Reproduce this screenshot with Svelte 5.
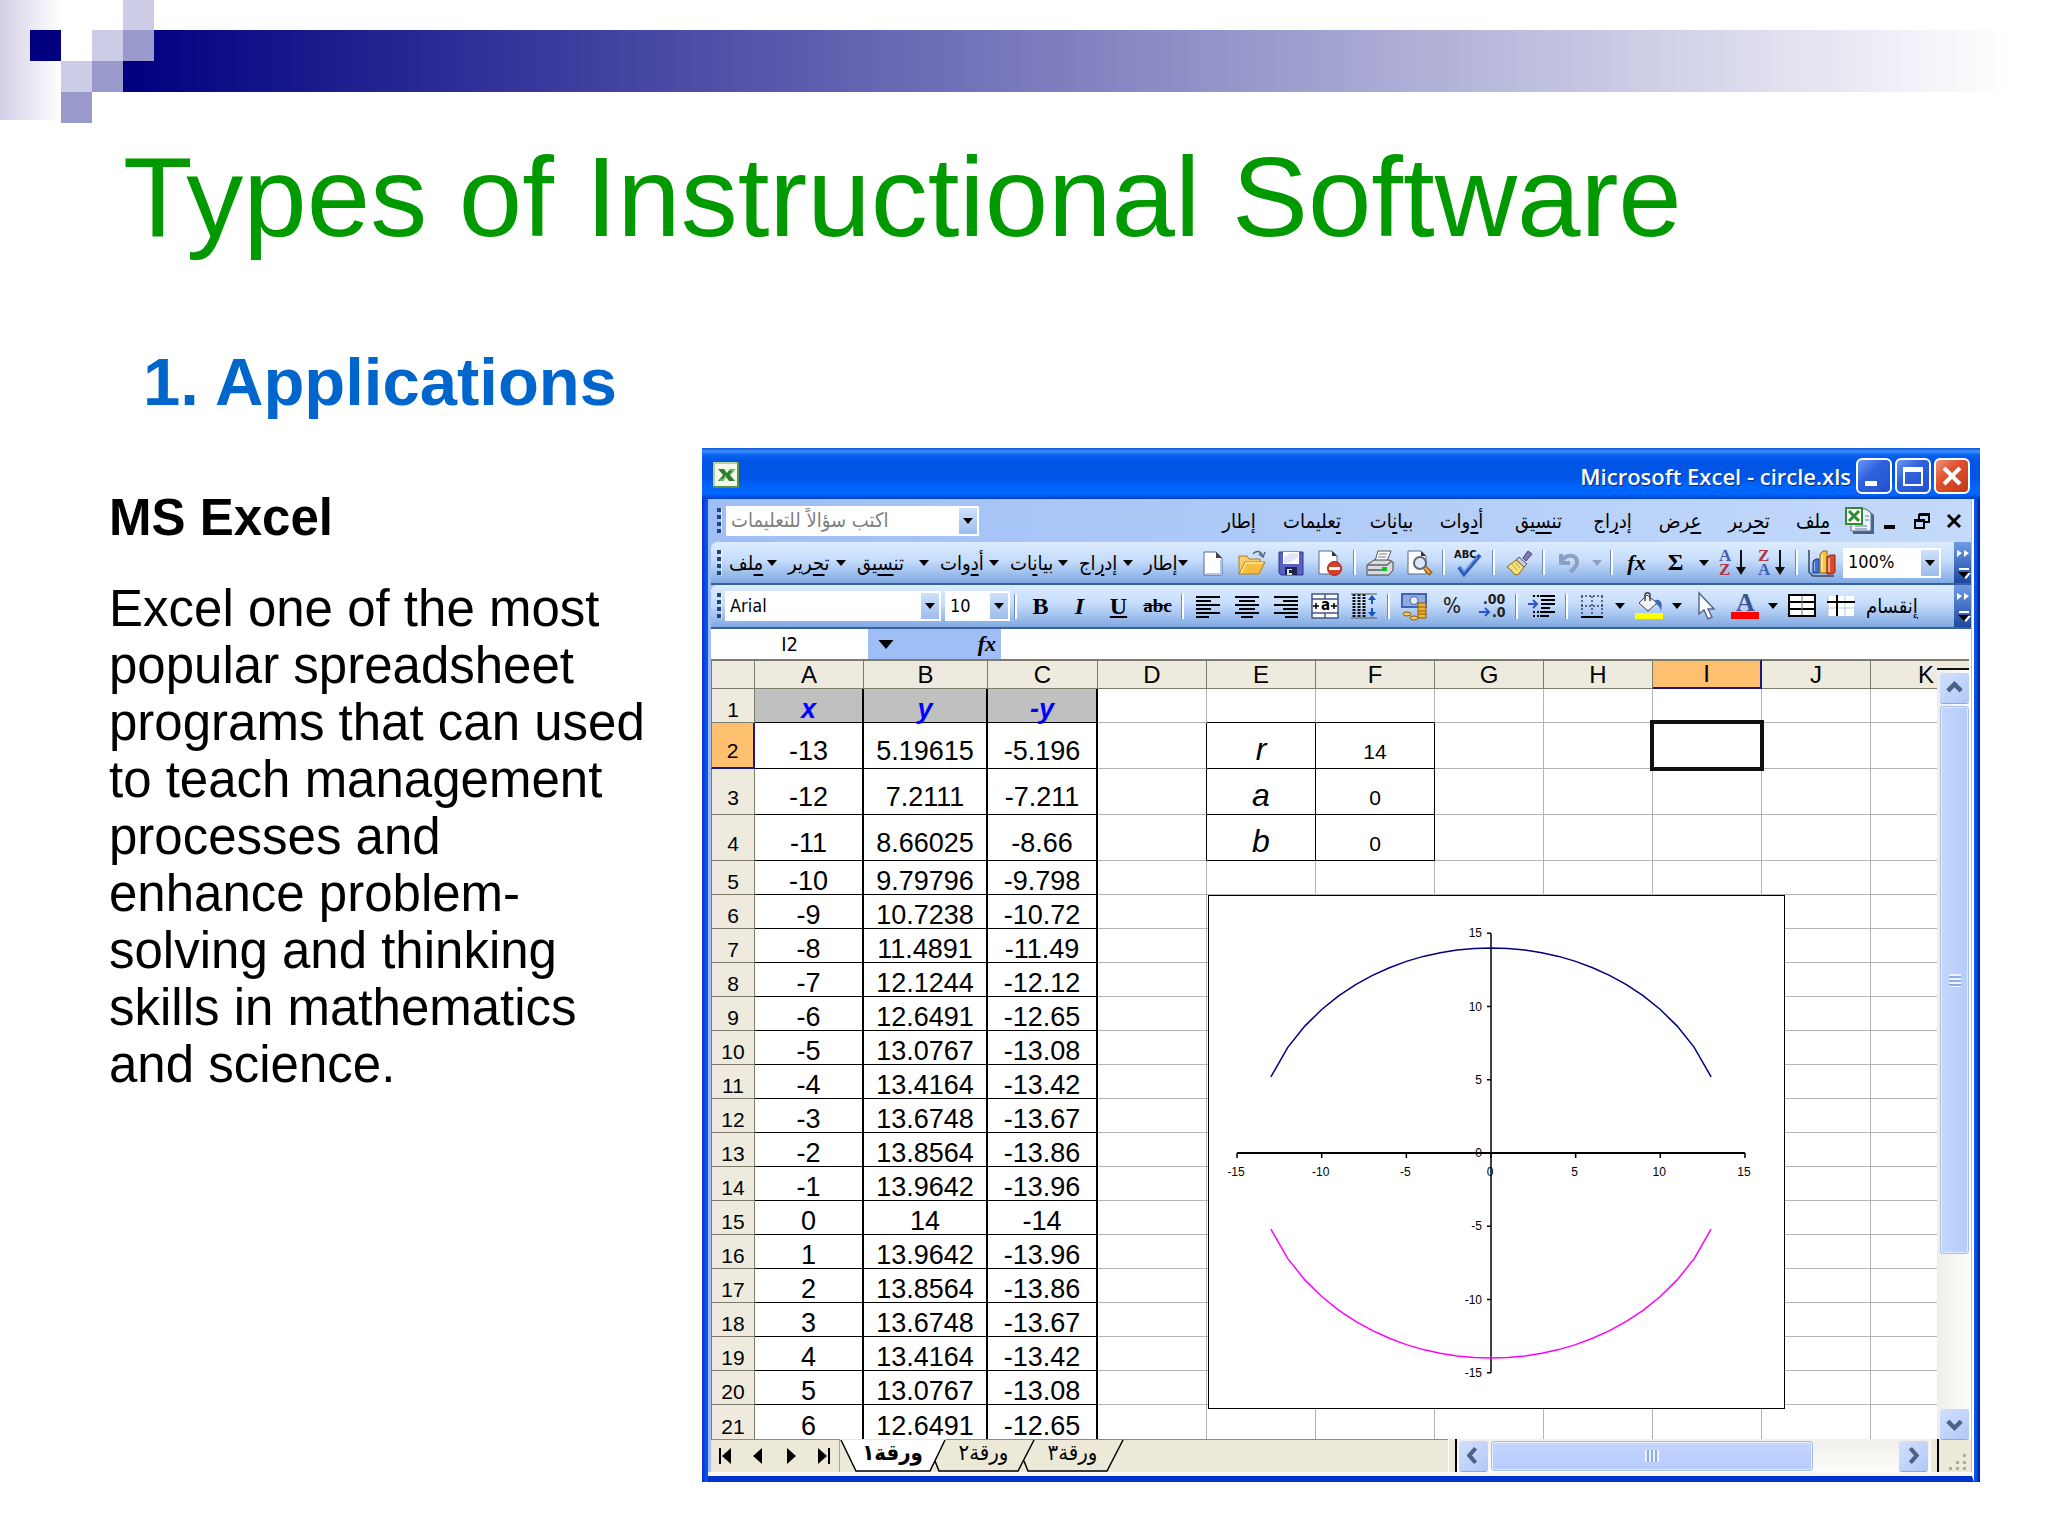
<script lang="ts">
	type Cell = string | number;

	const columns = ['A', 'B', 'C', 'D', 'E', 'F', 'G', 'H', 'I', 'J', 'K'];

	const values: Cell[][] = [
		['x', 'y', '-y'],
		[-13, '5.19615', '-5.196'],
		[-12, '7.2111', '-7.211'],
		[-11, '8.66025', '-8.66'],
		[-10, '9.79796', '-9.798'],
		[-9, '10.7238', '-10.72'],
		[-8, '11.4891', '-11.49'],
		[-7, '12.1244', '-12.12'],
		[-6, '12.6491', '-12.65'],
		[-5, '13.0767', '-13.08'],
		[-4, '13.4164', '-13.42'],
		[-3, '13.6748', '-13.67'],
		[-2, '13.8564', '-13.86'],
		[-1, '13.9642', '-13.96'],
		[0, '14', '-14'],
		[1, '13.9642', '-13.96'],
		[2, '13.8564', '-13.86'],
		[3, '13.6748', '-13.67'],
		[4, '13.4164', '-13.42'],
		[5, '13.0767', '-13.08'],
		[6, '12.6491', '-12.65']
	];

	// r, a and b live in E2:F4
	const params: Record<number, Cell[]> = { 1: ['r', 14], 2: ['a', 0], 3: ['b', 0] };

	// [before, accelerator, after]
	const menus = [
		['', 'إ', 'طار'],
		['', 'ت', 'عليمات'],
		['بيا', 'ن', 'ات'],
		['أ', 'د', 'وات'],
		['تن', 'س', 'يق'],
		['إد', 'ر', 'اج'],
		['', 'ع', 'رض'],
		['ت', 'ح', 'رير'],
		['', 'م', 'لف']
	];
	const barMenus = [8, 7, 4, 3, 2, 5, 0].map((i) => menus[i]);

	const ticks = [-15, -10, -5, 0, 5, 10, 15];
	const cx = 283;
	const cy = 258;
	const ux = 16.93;
	const uy = 14.65;

	function arc(sign: number) {
		const pts = [];
		for (let x = -13; x <= 13; x++) {
			const y = Math.sqrt(14 * 14 - x * x) * sign;
			pts.push(`${(cx + x * ux).toFixed(1)},${(cy - y * uy).toFixed(1)}`);
		}
		return pts.join(' ');
	}

	let zoom = $state('100%');
	let font = $state('Arial');
	let size = $state('10');
	let nameBox = $state('I2');
	let formula = $state('');
</script>

{#snippet down(cls = '')}
	<svg class="down {cls}" viewBox="0 0 10 6" width="10" height="6" aria-hidden="true"><path d="M0 0h10L5 6z" fill="currentColor" /></svg>
{/snippet}

{#snippet menuText(m: string[])}
	<bdi dir="rtl">{m[0]}<u>{m[1]}</u>{m[2]}</bdi>
{/snippet}

{#snippet excelMark()}
	<rect x="1" y="1" width="26" height="26" fill="#5d9148" />
	<rect x="1" y="1" width="24" height="24" fill="#b9d39c" />
	<rect x="3" y="3" width="22" height="22" fill="#f3f8e8" />
	<path d="M6 8h6l3 4 3-4h5l-5 6 5 6h-6l-3-4-3 4H6l5-6z" fill="#2e7d32" />
	<path d="M17 9h5l-4 5M8 19h3l3-4" fill="none" stroke="#7fc07a" stroke-width="1.5" />
{/snippet}

{#snippet icon(name: string)}
	<svg viewBox="0 0 28 28" width="28" height="28" aria-hidden="true">
		{#if name === 'new'}
			<path d="M5 3h12l6 6v17H5z" fill="#fff" stroke="#59688c" />
			<path d="M17 3v6h6z" fill="#444" />
			<path d="M22 11v14H7" fill="none" stroke="#b5c3e2" stroke-width="2" />
		{:else if name === 'open'}
			<path d="M1 25V7h8l2 3h11v4" fill="#f6cf6a" stroke="#b07d1c" />
			<path d="M1 25l6-12h20l-6 12z" fill="#f9bd3d" stroke="#b07d1c" />
			<path d="M3 24l5-10h17" fill="none" stroke="#ffeaa8" stroke-width="1.5" />
			<path d="M15 5c3-4 8-3 9 1m3-3l-2 5-4-3" fill="none" stroke="#52627f" stroke-width="1.5" />
		{:else if name === 'save'}
			<path d="M2 3h24v23H4l-2-2z" fill="#5a5fc4" stroke="#2f3587" />
			<path d="M6 3h16v12H6z" fill="#fff" /><path d="M7 9l6-5h8v4l-8 6H7z" fill="#dfe4fa" />
			<path d="M8 18h12v8H8z" fill="#1d2350" /><path d="M10 20h5v6h-5z" fill="#dde" /><path d="M12 21h3v3h-3z" fill="#222" />
		{:else if name === 'permission'}
			<path d="M3 2h13l5 5v18H3z" fill="#fff" stroke="#59688c" /><path d="M16 2v5h5z" fill="#333" />
			<circle cx="18.5" cy="19.5" r="7" fill="#d9402a" stroke="#a32414" /><path d="M13 18h11v3H13z" fill="#fff" />
		{:else if name === 'print'}
			<path d="M9 12l3-10h13l-4 10z" fill="#fff" stroke="#555" /><path d="M13 5h8M12 8h8" stroke="#777" />
			<path d="M1 16l7-5h15l4 2v8l-4 5H1z" fill="#d8dbe0" stroke="#444" />
			<path d="M1 16h20l5-4" fill="none" stroke="#666" stroke-width="1.5" /><path d="M2 20h19v2H2z" fill="#767b86" />
			<path d="M16 18h5v4h-5z" fill="#14c21b" />
		{:else if name === 'preview'}
			<path d="M3 2h13l5 5v18H3z" fill="#fff" stroke="#59688c" /><path d="M16 2v5h5z" fill="#333" />
			<circle cx="15" cy="14" r="6" fill="#d8e8fb" stroke="#667" stroke-width="2" />
			<path d="M20 19l6 6" stroke="#8d5a1d" stroke-width="5" /><path d="M20 19l5 5" stroke="#eda33a" stroke-width="2.5" />
		{:else if name === 'spell'}
			<text x="-1" y="9" font-size="11" font-weight="700" fill="#111">ABC</text>
			<path d="M4 18l5 7L25 6" fill="none" stroke="#2e5cc0" stroke-width="4" /><path d="M5 17l4 6L22 8" fill="none" stroke="#8fb0f0" stroke-width="1" />
		{:else if name === 'brush'}
			<path d="M18 9l5-7 4 3-6 7z" fill="#8279ad" stroke="#4b426f" /><path d="M14 8l8 7-3 3-8-7z" fill="#c9c9d8" stroke="#555" />
			<path d="M11 11l8 7-6 8-4-1-3-4-4-3z" fill="#f4df7c" stroke="#86701c" />
			<path d="M7 15l5 6M10 13l5 6" stroke="#c4a83f" />
		{:else if name === 'undo'}
			<path d="M6 5v9h9M6 14C9 5 22 4 22 13c0 5-4 8-7 10" fill="none" stroke="#8c9fc4" stroke-width="4" />
		{:else if name === 'az' || name === 'za'}
			<text x="0" y="12" font-family="Liberation Serif" font-size="17" font-weight="700" fill={name === 'az' ? '#3f5fae' : '#b0323c'}>{name === 'az' ? 'A' : 'Z'}</text>
			<text x="0" y="26" font-family="Liberation Serif" font-size="17" font-weight="700" fill={name === 'az' ? '#b0323c' : '#3f5fae'}>{name === 'az' ? 'Z' : 'A'}</text>
			<path d="M22 1v22" stroke="#111" stroke-width="2" /><path d="M17 18h10l-5 8z" fill="#111" />
		{:else if name === 'chart'}
			<path d="M1 1v22l4 4h21" fill="none" stroke="#3b4660" stroke-width="1.5" />
			<path d="M5 12l3-2h3v14H5z" fill="#3d73d8" stroke="#1d3f8a" /><path d="M12 5l3-3h4v22h-7z" fill="#f7c541" stroke="#8f6812" />
			<path d="M19 8l3-2h5v17l-2 2h-6z" fill="#dd4a25" stroke="#8a2410" /><path d="M13 6h2v16h-2zM20 9h2v14h-2zM6 13h1v9H6z" fill="#fff" opacity=".5" />
		{:else if name === 'left'}
			<path d="M2 5h24M2 9h15M2 13h24M2 17h15M2 21h24M2 25h13" stroke="#000" stroke-width="2" />
		{:else if name === 'center'}
			<path d="M2 5h24M6 9h16M2 13h24M6 17h16M2 21h24M8 25h12" stroke="#000" stroke-width="2" />
		{:else if name === 'right'}
			<path d="M2 5h24M11 9h15M2 13h24M11 17h15M2 21h24M13 25h13" stroke="#000" stroke-width="2" />
		{:else if name === 'merge'}
			<path d="M1 2h26v24H1z" fill="#fff" stroke="#44567f" stroke-width="1.5" />
			<path d="M1 7h26M1 21h26M14 2v5M14 21v5" stroke="#44567f" stroke-width="1.5" />
			<text x="10" y="18" font-size="15" font-weight="700">a</text><path d="M2 14h6M5 11v6M26 14h-6M23 11v6" stroke="#000" fill="none" stroke-width="1.5" />
		{:else if name === 'spacing'}
			<path d="M4 2v24M9 2v24M14 2v24" stroke="#111" stroke-width="3" stroke-dasharray="2 1" /><path d="M1 2h26M1 26h26" stroke="#555" />
			<path d="M22 4v8M22 16v8" stroke="#1554d1" stroke-width="2" /><path d="M18 8l4-5 4 5zM18 20l4 5 4-5z" fill="#1554d1" />
		{:else if name === 'currency'}
			<path d="M1 1h26v15H1z" fill="#3f63b5" /><path d="M3 3h22v11H3z" fill="#91abdc" /><circle cx="14" cy="8.5" r="4" fill="#e4ecfa" stroke="#3f63b5" />
			<path d="M18 11h8v15h-8z" fill="#f1b32c" stroke="#8b5a0c" /><path d="M18 15h8M18 19h8M18 22h8" stroke="#8b5a0c" />
			<ellipse cx="7" cy="22" rx="4" ry="2" fill="#f6c84c" stroke="#8b5a0c" /><ellipse cx="14" cy="26" rx="4" ry="2" fill="#f6c84c" stroke="#8b5a0c" />
		{:else if name === 'percent'}
			<text x="4" y="21" font-size="21" fill="#111">%</text>
		{:else if name === 'decimal'}
			<text x="5" y="12" font-size="14" font-weight="700" fill="#222">.00</text><text x="14" y="25" font-size="14" font-weight="700" fill="#222">.0</text>
			<path d="M1 20h10M7 16l4 4-4 4" fill="none" stroke="#2b57c4" stroke-width="2" />
		{:else if name === 'indent'}
			<path d="M3 4h24M13 8h14M13 12h14M13 16h9M3 20h24M3 24h18" stroke="#000" stroke-width="2" /><path d="M3 4h9M3 20h9M3 24h9" stroke="#b7cff5" stroke-width="2" stroke-dasharray="2 2" />
			<path d="M0 12h9M5 8l4 4-4 4" fill="none" stroke="#2b57c4" stroke-width="2" />
		{:else if name === 'borders'}
			<path d="M3 4h22M3 14h22M4 4v18M14 4v18M24 4v18" stroke="#35456e" stroke-width="1.5" stroke-dasharray="2 2" /><path d="M3 25h22" stroke="#000" stroke-width="2" />
		{:else if name === 'fill'}
			<path d="M12 3l10 8-9 8-9-8z" fill="#f2f4f8" stroke="#444" /><path d="M10 9V3c0-3 5-3 5 0v6" fill="none" stroke="#444" stroke-width="1.5" />
			<path d="M20 8c6-1 8 3 6 11-1-4-3-6-5-7z" fill="#3e67b4" /><path d="M0 21h28v6H0z" fill="#ff0" />
		{:else if name === 'cursor'}
			<path d="M7 1v21l5-4 4 9 4-2-4-8h6z" fill="#fff" stroke="#56698f" stroke-width="1.5" />
		{:else if name === 'fontcolor'}
			<text x="5" y="19" font-family="Liberation Serif" font-size="26" font-weight="700" fill="#3d5493">A</text><path d="M0 20h28v7H0z" fill="#f00" />
		{:else if name === 'table'}
			<path d="M1 3h26v21H1z" fill="#fff" stroke="#000" stroke-width="2" /><path d="M1 10h26M1 17h26" stroke="#000" stroke-width="2" /><path d="M14 4v19" stroke="#777" />
		{:else if name === 'panes'}
			<path d="M1 4h26v20H1z" fill="#fff" /><path d="M1 16h26M18 4v20M1 4v20" stroke="#b7c4e0" /><path d="M0 10h28M10 3v21" stroke="#000" stroke-width="2" />
		{/if}
	</svg>
{/snippet}

{#snippet tool(name: string, label: string)}
	<button class="tool" aria-label={label}>{@render icon(name)}</button>
{/snippet}

{#snippet chevron()}
	<button class="more" aria-label="More buttons">
		<svg viewBox="0 0 17 42" width="17" height="42" aria-hidden="true">
			<path d="M3 8l5 3-5 4zM10 8l5 3-5 4zM5 26h10v2H5zM6 31h11l-5 6z" fill="#fff" />
			<path d="M4 30h11l-5 6z" fill="#000" />
		</svg>
	</button>
{/snippet}

<main class="slide">
	<div class="decor" aria-hidden="true">
		<i class="fade"></i>
		<i class="bar"></i>
		<i class="sq navy c2 r2"></i>
		<i class="sq light c5 r1"></i>
		<i class="sq light c4 r2"></i>
		<i class="sq mid c5 r2"></i>
		<i class="sq light c3 r3"></i>
		<i class="sq mid c4 r3"></i>
		<i class="sq mid c3 r4"></i>
	</div>

	<h1>Types of Instructional Software</h1>
	<h2>1. Applications</h2>

	<div class="content">
		<section class="notes">
			<h3>MS Excel</h3>
			<p>
				Excel one of the most<br />popular spreadsheet<br />programs that can used<br />to teach management<br />processes and<br />enhance
				problem-<br />solving and thinking<br />skills in mathematics<br />and science.
			</p>
		</section>

		<section class="window">
			<header class="titlebar">
				<svg class="app" viewBox="0 0 28 28" width="28" height="28" aria-hidden="true">{@render excelMark()}</svg>
				<span class="caption">Microsoft Excel - circle.xls</span>
				<button class="win" aria-label="Minimize"><svg viewBox="0 0 32 32"><path d="M7 21h12v5H7z" fill="#fff" /></svg></button>
				<button class="win" aria-label="Maximize"><svg viewBox="0 0 32 32"><path d="M7 9h18v16H7z" fill="none" stroke="#fff" stroke-width="2" /><path d="M6 7h20v5H6z" fill="#fff" /></svg></button>
				<button class="win close" aria-label="Close"><svg viewBox="0 0 32 32"><path d="M8 8l16 16M24 8L8 24" stroke="#fff" stroke-width="4" /></svg></button>
			</header>

			<div class="client">
				<nav class="menubar">
					<span class="grip"></span>
					<label class="combo help">
						<select aria-label="Help question"><option>اكتب سؤالاً للتعليمات</option></select>
						<span class="drop">{@render down()}</span>
					</label>
					<div class="menus">
						{#each menus as m}
							<button class="menu">{@render menuText(m)}</button>
						{/each}
					</div>
					<svg class="doc" viewBox="0 0 30 28" width="30" height="28" aria-hidden="true">
						<path d="M8 3h15l6 5v19H8z" fill="#4c6285" /><path d="M6 2h15l5 4v18H6z" fill="#eef3fb" stroke="#5a6f95" />
						<path d="M10 19h12M10 22h12M20 9h4M20 13h4" stroke="#8da2c8" stroke-width="1.5" />
						<path d="M1 1h16v16H1z" fill="#fff" stroke="#2f8b2f" stroke-width="2" /><path d="M4 4l10 10M14 4L4 14" stroke="#2f8b2f" stroke-width="3" />
					</svg>
					<button class="mdi" aria-label="Minimize workbook"><svg viewBox="0 0 16 18"><path d="M2 13h11v4H2z" /></svg></button>
					<button class="mdi" aria-label="Restore workbook"><svg viewBox="0 0 16 18"><path d="M5 2h10v8h-4M5 2v5M5 3h10M1 8h9v8H1zM1 9h9" fill="none" stroke="#000" stroke-width="2" /></svg></button>
					<button class="mdi" aria-label="Close workbook"><svg viewBox="0 0 16 18"><path d="M2 3l12 12M14 3L2 15" stroke="#000" stroke-width="3" /></svg></button>
				</nav>

				<div class="toolbar">
					<span class="grip"></span>
					<div class="bar-menus">
						{#each barMenus as m}
							<button class="menu">{@render menuText(m)}{@render down()}</button>
						{/each}
					</div>
					{@render tool('new', 'New')}
					{@render tool('open', 'Open')}
					{@render tool('save', 'Save')}
					{@render tool('permission', 'Permission')}
					<span class="sep"></span>
					{@render tool('print', 'Print')}
					{@render tool('preview', 'Print preview')}
					<span class="sep"></span>
					{@render tool('spell', 'Spelling')}
					<span class="sep"></span>
					{@render tool('brush', 'Format painter')}
					<span class="sep"></span>
					{@render tool('undo', 'Undo')}
					<button class="arrow faded" aria-label="Undo list">{@render down()}</button>
					<span class="sep"></span>
					<button class="tool fx">fx</button>
					<button class="tool sigma">Σ</button>
					<button class="arrow" aria-label="More functions">{@render down()}</button>
					{@render tool('az', 'Sort ascending')}
					{@render tool('za', 'Sort descending')}
					<span class="sep"></span>
					{@render tool('chart', 'Chart wizard')}
					<label class="combo zoom">
						<select bind:value={zoom} aria-label="Zoom"><option>100%</option></select>
						<span class="drop">{@render down()}</span>
					</label>
					{@render chevron()}
				</div>

				<div class="toolbar">
					<span class="grip"></span>
					<label class="combo font">
						<select bind:value={font} aria-label="Font"><option>Arial</option></select>
						<span class="drop">{@render down()}</span>
					</label>
					<label class="combo size">
						<select bind:value={size} aria-label="Font size"><option>10</option></select>
						<span class="drop">{@render down()}</span>
					</label>
					<span class="sep"></span>
					<button class="tool letter"><b>B</b></button>
					<button class="tool letter"><i>I</i></button>
					<button class="tool letter"><u>U</u></button>
					<button class="tool letter"><s>abc</s></button>
					<span class="sep"></span>
					{@render tool('left', 'Align left')}
					{@render tool('center', 'Center')}
					{@render tool('right', 'Align right')}
					{@render tool('merge', 'Merge and center')}
					{@render tool('spacing', 'Row height')}
					<span class="sep"></span>
					{@render tool('currency', 'Currency')}
					{@render tool('percent', 'Percent style')}
					{@render tool('decimal', 'Decrease decimal')}
					<span class="sep"></span>
					{@render tool('indent', 'Increase indent')}
					<span class="sep"></span>
					{@render tool('borders', 'Borders')}
					<button class="arrow" aria-label="Border list">{@render down()}</button>
					{@render tool('fill', 'Fill color')}
					<button class="arrow" aria-label="Fill colors">{@render down()}</button>
					{@render tool('cursor', 'Select objects')}
					{@render tool('fontcolor', 'Font color')}
					<button class="arrow" aria-label="Font colors">{@render down()}</button>
					{@render tool('table', 'Table')}
					{@render tool('panes', 'Freeze panes')}
					<button class="menu split">{@render menuText(['', 'إ', 'نقسام'])}</button>
					{@render chevron()}
				</div>

				<div class="formula">
					<input class="name" aria-label="Name box" bind:value={nameBox} />
					<div class="tools">
						<button class="arrow" aria-label="Names">{@render down('big')}</button>
						<button class="fx">fx</button>
					</div>
					<input class="entry" aria-label="Formula" bind:value={formula} />
				</div>

				<div class="sheet">
					<div class="cells">
						<table>
							<colgroup>
								<col class="w-head" /><col class="w" /><col class="w-b" /><col class="w-c" /><col class="w" /><col class="w" />
								<col class="w-f" /><col class="w" /><col class="w" /><col class="w" /><col class="w" /><col />
							</colgroup>
							<thead>
								<tr>
									<th></th>
									{#each columns as c}
										<th scope="col" class:active={c === 'I'} class:cut={c === 'K'}>{c}</th>
									{/each}
								</tr>
							</thead>
							<tbody>
								{#each values as row, r}
									<tr class:tall={r > 0 && r < 4}>
										<th scope="row" class:active={r === 1}>{r + 1}</th>
										{#each row as v}
											<td class="num" class:label={r === 0}>{v}</td>
										{/each}
										<td class:edge={params[r]}></td>
										{#if params[r]}
											<td class="box sym">{params[r][0]}</td>
											<td class="box">{params[r][1]}</td>
										{:else}
											<td class:under={r === 0}></td>
											<td class:under={r === 0}></td>
										{/if}
										<td></td>
										<td></td>
										<td class:selected={r === 1}></td>
										<td></td>
										<td class="cut"></td>
									</tr>
								{/each}
							</tbody>
						</table>

						<svg class="plot" viewBox="0 0 577 514" width="577" height="514" role="img" aria-label="Circle chart">
							<rect x="0.5" y="0.5" width="576" height="513" fill="#fff" stroke="#000" />
							<path d="M{cx - 15 * ux} {cy}H{cx + 15 * ux}" stroke="#000" stroke-width="2" />
							<path d="M{cx} {cy - 15 * uy}V{cy + 15 * uy}" stroke="#000" stroke-width="1.5" />
							{#each ticks as t}
								<path d="M{cx + t * ux} {cy}v5M{cx - 4} {cy - t * uy}h4" stroke="#000" stroke-width="1.5" />
								<text x={cx + t * ux - 1} y={cy + 23} text-anchor="middle">{t}</text>
								<text x={cx - 9} y={cy - t * uy + 4} text-anchor="end">{t}</text>
							{/each}
							<polyline points={arc(1)} fill="none" stroke="#000080" stroke-width="1.5" />
							<polyline points={arc(-1)} fill="none" stroke="#f0f" stroke-width="1.5" />
						</svg>
					</div>

					<div class="vscroll">
						<span class="vsplit"></span>
						<button class="sb" aria-label="Scroll up"><svg viewBox="0 0 26 28"><path d="M7 16l6-6 6 6" /></svg></button>
						<div class="thumb"><i></i></div>
						<div class="rest"></div>
						<button class="sb" aria-label="Scroll down"><svg viewBox="0 0 26 28"><path d="M7 11l6 6 6-6" /></svg></button>
					</div>
				</div>

				<footer class="bottom">
					<div class="nav">
						<button aria-label="First sheet"><svg viewBox="0 0 14 16"><path d="M1 0h2v16H1zM13 0v16L4 8z" /></svg></button>
						<button aria-label="Previous sheet"><svg viewBox="0 0 14 16"><path d="M11 0v16L2 8z" /></svg></button>
						<button aria-label="Next sheet"><svg viewBox="0 0 14 16"><path d="M3 0v16l9-8z" /></svg></button>
						<button aria-label="Last sheet"><svg viewBox="0 0 14 16"><path d="M11 0h2v16h-2zM1 0v16l9-8z" /></svg></button>
					</div>
					<div class="tabs">
						<svg class="shapes" viewBox="0 0 286 33" width="286" height="33" aria-hidden="true">
							<path d="M1 1l15 31h74L105 1z" fill="#fff" />
							<path d="M1 1l15 31h74L105 1M95 22l4 10h79L194 1M184 22l4 10h79L283 1" fill="none" stroke="#000" stroke-width="1.5" />
						</svg>
						<button class="tab current" dir="rtl">ورقة١</button>
						<button class="tab" dir="rtl">ورقة٢</button>
						<button class="tab" dir="rtl">ورقة٣</button>
					</div>
					<span class="hsplit"></span>
					<div class="hscroll">
						<button class="sb" aria-label="Scroll left"><svg viewBox="0 0 28 28"><path d="M16 7l-6 7 6 7" /></svg></button>
						<div class="thumb"><i></i></div>
						<div class="rest"></div>
						<button class="sb" aria-label="Scroll right"><svg viewBox="0 0 28 28"><path d="M11 7l6 7-6 7" /></svg></button>
					</div>
					<span class="hsplit"></span>
					<svg class="resize" viewBox="0 0 32 33" width="32" height="33" aria-hidden="true">
						<path d="M24 15h3v3h-3zM17 22h3v3h-3zM24 22h3v3h-3zM10 28h3v3h-3zM17 28h3v3h-3zM24 28h3v3h-3z" fill="#aeab9a" />
					</svg>
				</footer>
			</div>
		</section>
	</div>
</main>

<style>
	:global(body) {
		background: #fff;
	}

	.slide {
		min-height: 100vh;
		box-sizing: border-box;
		padding-bottom: 54px;
		font-family: 'Liberation Sans', Arial, sans-serif;
		color: #000;
		overflow: hidden;
	}

	button,
	input,
	select {
		margin: 0;
		padding: 0;
		border: 0;
		border-radius: 0;
		background: none;
		font: inherit;
		color: inherit;
	}

	/* slide template */
	.decor {
		display: grid;
		grid-template-columns: 30px 31px 31px 31px 31px 1fr;
		grid-template-rows: 30px 31px 31px 31px;
	}
	.fade {
		grid-area: 1 / 1 / 5 / 3;
		margin-bottom: 3px;
		background: linear-gradient(90deg, #d2cee6, #fff);
	}
	.bar {
		grid-area: 2 / 5 / 4 / 7;
		margin-right: 38px;
		background: linear-gradient(90deg, #000080, #fff);
	}
	.navy { background: #000080; }
	.light { background: #cccce6; }
	.mid { background: #9999cc; }
	.c2 { grid-column: 2; }
	.c3 { grid-column: 3; }
	.c4 { grid-column: 4; }
	.c5 { grid-column: 5; }
	.r1 { grid-row: 1; }
	.r2 { grid-row: 2; }
	.r3 { grid-row: 3; }
	.r4 { grid-row: 4; }

	h1 {
		margin: 8px 0 0 123px;
		font-size: 114px;
		line-height: 132px;
		font-weight: 400;
		color: #009900;
	}
	h2 {
		margin: 80px 0 27px 143px;
		font-size: 67px;
		line-height: 78px;
		color: #0066cc;
	}
	.content {
		display: grid;
		grid-template-columns: 702px minmax(0, 1fr);
		padding-right: 68px;
		align-items: start;
	}
	.notes {
		padding: 41px 0 0 109px;
		font-size: 51px;
		line-height: 57px;
	}
	h3 {
		margin: 0 0 34px;
		font-size: 51px;
	}
	p {
		margin: 0;
	}

	/* window frame */
	.window {
		background: linear-gradient(90deg, #0a2fd0, #0855e8 4px, #0855e8 calc(100% - 4px), #00138c);
		font-family: 'DejaVu Sans Condensed', 'DejaVu Sans', sans-serif;
		font-size: 18px;
	}
	.titlebar {
		display: flex;
		align-items: center;
		gap: 3px;
		height: 51px;
		padding: 4px 10px 0;
		box-sizing: border-box;
		background: linear-gradient(#0a52d8, #3d90fb 3px, #0a62f0 7px, #0054e3 14px, #0056e8 30px, #0066ff 40px, #0066ff 46px, #0040c8);
		color: #fff;
	}
	.app {
		margin-right: auto;
		margin-bottom: 2px;
	}
	.caption {
		margin-right: 2px;
		font-family: 'Open Sans', sans-serif;
		font-size: 22px;
		font-weight: 600;
		text-shadow: 1px 1px #0a2a80;
	}
	.win {
		width: 36px;
		height: 36px;
		border: 2px solid #fff;
		border-radius: 6px;
		background: linear-gradient(135deg, #6f97f4, #2f62dc 40%, #2450cc);
	}
	.win svg {
		display: block;
	}
	.close {
		background: linear-gradient(135deg, #f0937c, #de5030 40%, #c33a17);
	}
	.client {
		margin: 0 6px;
		padding: 0 1px 4px 3px;
		border-right: 2px solid #fff;
		background: linear-gradient(#9ebef5, #9ebef5) no-repeat 0 0 / 100% calc(100% - 4px), #f6f6fb;
		border-bottom: 6px solid #0030cf;
	}

	/* menus and toolbars */
	.menubar {
		display: flex;
		align-items: center;
		height: 43px;
		background: linear-gradient(90deg, #9ebef5, #c4dafa);
	}
	.toolbar {
		display: flex;
		align-items: center;
		height: 43px;
		box-sizing: border-box;
		border-bottom: 2px solid #3b619c;
		border-top-left-radius: 6px;
		background: linear-gradient(#ddecfe, #c5dcfb 45%, #81a9e2);
	}
	.toolbar + .toolbar {
		height: 44px;
	}
	.grip {
		flex: none;
		width: 4px;
		height: 26px;
		margin: 0 4px 0 6px;
		background: repeating-linear-gradient(#27417f 0 4px, transparent 4px 7px);
		box-shadow: 1px 0 rgba(255, 255, 255, 0.6);
	}
	.combo {
		position: relative;
		flex: none;
		height: 30px;
		box-sizing: border-box;
		border: 1px solid #fff;
		background: #fff;
	}
	.combo select {
		appearance: none;
		display: block;
		width: 100%;
		height: 28px;
		padding: 0 4px 2px;
		text-align: left;
	}
	.drop {
		position: absolute;
		inset: 1px 1px 1px auto;
		width: 18px;
		display: grid;
		place-items: center;
		background: linear-gradient(#cfe1fc, #9dbdec);
		pointer-events: none;
	}
	.help { width: 253px; margin-left: 1px; color: #808080; font-size: 20px; }
	.help .drop { color: #000; }
	.font { width: 216px; }
	.size { width: 65px; margin-left: 4px; }
	.zoom { width: 98px; margin-left: 2px; }
	.down {
		flex: none;
	}
	.down.big {
		width: 16px;
		height: 9px;
	}
	.menus {
		display: grid;
		grid-template-columns: 30px 62px 43px 43px 57px 37px 44px 40px 34px;
		gap: 27px;
		margin-left: auto;
	}
	.menu {
		display: flex;
		align-items: center;
		justify-content: space-between;
		white-space: nowrap;
		line-height: 28px;
		font-size: 20px;
	}
	.menus .menu {
		justify-content: center;
	}
	.menu u {
		text-underline-offset: 4px;
	}
	.bar-menus {
		display: grid;
		grid-template-columns: 48px 58px 72px 59px 58px 54px 43px;
		gap: 11px;
		width: 458px;
		margin-left: 4px;
		margin-right: 6px;
	}
	.doc {
		margin: 0 7px 0 15px;
	}
	.mdi {
		width: 16px;
		height: 18px;
		margin-right: 16px;
	}
	.mdi:last-child {
		margin-right: 9px;
	}
	.mdi svg {
		display: block;
	}
	.tool {
		flex: none;
		display: grid;
		place-items: center;
		width: 39px;
		height: 38px;
	}
	.tool svg {
		overflow: visible;
	}
	.sep {
		flex: none;
		width: 11px;
		height: 25px;
		background: linear-gradient(90deg, transparent 4px, #6a8ccb 4px 5px, #fff 5px 7px, transparent 7px);
	}
	.arrow {
		flex: none;
		width: 18px;
		height: 38px;
		display: grid;
		place-items: center;
	}
	.faded {
		color: #8c9fc4;
	}
	.fx {
		font-family: 'Liberation Serif', serif;
		font-style: italic;
		font-weight: 700;
		font-size: 22px;
	}
	.sigma {
		font-family: 'Liberation Serif', serif;
		font-weight: 700;
		font-size: 24px;
	}
	.letter {
		font-family: 'Liberation Serif', serif;
		font-weight: 700;
		font-size: 24px;
	}
	.letter s {
		font-size: 19px;
	}
	.split {
		margin-left: 6px;
	}
	.more {
		flex: none;
		align-self: stretch;
		width: 17px;
		margin-left: auto;
		background: linear-gradient(#6f9be6, #1c49a0);
	}
	.more svg {
		display: block;
	}

	/* formula bar */
	.formula {
		display: flex;
		height: 30px;
	}
	.name {
		width: 157px;
		background: #fff;
		text-align: center;
		font-size: 20px;
	}
	.tools {
		display: flex;
		align-items: center;
		justify-content: space-between;
		width: 133px;
		box-sizing: border-box;
		padding: 0 5px 0 9px;
		background: #9ebef5;
	}
	.entry {
		flex: 1;
		min-width: 0;
		background: #fff;
	}

	/* grid */
	.sheet {
		display: flex;
		background: #fff;
	}
	.cells {
		position: relative;
		flex: 1;
		min-width: 0;
		overflow: hidden;
	}
	table {
		width: 100%;
		table-layout: fixed;
		border-collapse: separate;
		border-spacing: 0;
		font-family: 'Liberation Sans', Arial, sans-serif;
		font-size: 27px;
		line-height: 26px;
		background: #fff;
	}
	.w-head { width: 44px; }
	.w { width: 109px; }
	.w-b { width: 124px; }
	.w-c { width: 110px; }
	.w-f { width: 119px; }
	th,
	td {
		height: 34px;
		box-sizing: border-box;
		padding: 0;
		text-align: center;
		vertical-align: bottom;
		border-right: 1px solid #b4b4b4;
		border-bottom: 1px solid #b4b4b4;
	}
	th {
		font-weight: 400;
		font-size: 21px;
		background: #eeebde;
		border-color: #7d7b6a;
	}
	thead th {
		height: 30px;
		font-size: 24px;
		vertical-align: middle;
		border-top: 2px solid #7d7b6a;
	}
	tbody th {
		line-height: 24px;
	}
	th:first-child {
		border-left: 1px solid #7d7b6a;
	}
	.tall th,
	.tall td {
		height: 46px;
		padding-bottom: 4px;
	}
	th.active {
		background: #ffc06f;
		border-right: 2px solid #1c1a80;
		border-bottom: 2px solid #1c1a80;
	}
	thead .cut {
		text-align: right;
		padding-right: 3px;
	}
	.cut {
		border-right: 0;
	}
	td.num {
		border-right: 2px solid #000;
		border-bottom: 1px solid #000;
	}
	td.label {
		background: #c0c0c0;
		font-weight: 700;
		font-style: italic;
		color: #0000ff;
	}
	td.box {
		font-size: 21px;
		line-height: 24px;
	}
	td.box,
	td.under {
		border-bottom-color: #000;
	}
	td.box,
	td.edge {
		border-right-color: #000;
	}
	td.sym {
		font-size: 32px;
		font-style: italic;
		line-height: 30px;
	}
	td.selected {
		position: relative;
	}
	td.selected::after {
		content: '';
		position: absolute;
		inset: -3px;
		border: 4px solid #111;
	}
	tbody tr:last-child > * {
		border-bottom: 0;
	}
	.plot {
		position: absolute;
		left: 497px;
		top: 236px;
	}
	.plot text {
		font: 12px 'Liberation Sans', Arial, sans-serif;
	}

	/* scroll bars */
	.vscroll {
		display: flex;
		flex-direction: column;
		gap: 3px;
		width: 34px;
		box-sizing: border-box;
		padding: 0 2px 0 3px;
		background: linear-gradient(90deg, #efeee8, #fdfdfb);
	}
	.vsplit {
		height: 11px;
		box-sizing: border-box;
		margin-left: -3px;
		border-top: 2px solid #7d7b6a;
		border-bottom: 2px solid #111;
		background: #ece9d8;
	}
	.sb {
		flex: none;
		width: 29px;
		height: 30px;
		border-radius: 3px;
		background: linear-gradient(135deg, #d3e0fd, #b0c8f8);
		box-shadow: 0 1px #88a8e0;
	}
	.sb svg {
		display: block;
		fill: none;
		stroke: #4d6185;
		stroke-width: 4;
	}
	.thumb {
		display: grid;
		place-items: center;
		border: 1px solid #a3bff2;
		border-radius: 3px;
		box-shadow: inset 0 0 0 1px #e4edff;
	}
	.vscroll .thumb {
		flex: 11;
		background: linear-gradient(90deg, #c6d7fe, #b5cbfb);
	}
	.vscroll .thumb i {
		width: 12px;
		height: 13px;
		background: repeating-linear-gradient(#eef4ff 0 2px, #8caee8 2px 4px);
	}
	.vscroll .rest {
		flex: 3;
	}
	.bottom {
		display: flex;
		height: 33px;
		background: #ece9d8;
	}
	.nav {
		display: flex;
		align-items: center;
		gap: 19px;
		width: 129px;
		box-sizing: border-box;
		padding-left: 7px;
		border-right: 1px solid #a7a595;
		border-top: 1px solid #8d8b7a;
	}
	.nav button {
		width: 14px;
		height: 16px;
	}
	.nav svg {
		display: block;
	}
	.tabs {
		position: relative;
		flex: 1;
		display: flex;
		box-sizing: border-box;
		background: linear-gradient(#8d8b7a, #8d8b7a) no-repeat 106px 0 / 100% 1px;
	}
	.shapes {
		position: absolute;
		left: 0;
		top: 0;
	}
	.tab {
		position: relative;
		width: 89px;
		padding: 0 12px 6px 0;
		line-height: 26px;
		font-size: 22px;
	}
	.tab.current {
		width: 105px;
		padding-right: 0;
		font-weight: 700;
	}
	.hsplit {
		flex: none;
		width: 9px;
		box-sizing: border-box;
		border-left: 1px solid #fff;
		border-right: 2px solid #000;
		background: #ece9d8;
	}
	.hscroll {
		display: flex;
		align-items: center;
		gap: 3px;
		width: 473px;
		box-sizing: border-box;
		padding: 0 2px;
		background: linear-gradient(#f0efe9, #fdfdfb);
	}
	.hscroll .thumb {
		flex: 4;
		height: 28px;
		background: linear-gradient(#c6d7fe, #b5cbfb);
	}
	.hscroll .thumb i {
		width: 14px;
		height: 12px;
		background: repeating-linear-gradient(90deg, #eef4ff 0 2px, #8caee8 2px 4px);
	}
	.hscroll .rest {
		flex: 1;
	}
	.resize {
		flex: none;
	}
</style>
